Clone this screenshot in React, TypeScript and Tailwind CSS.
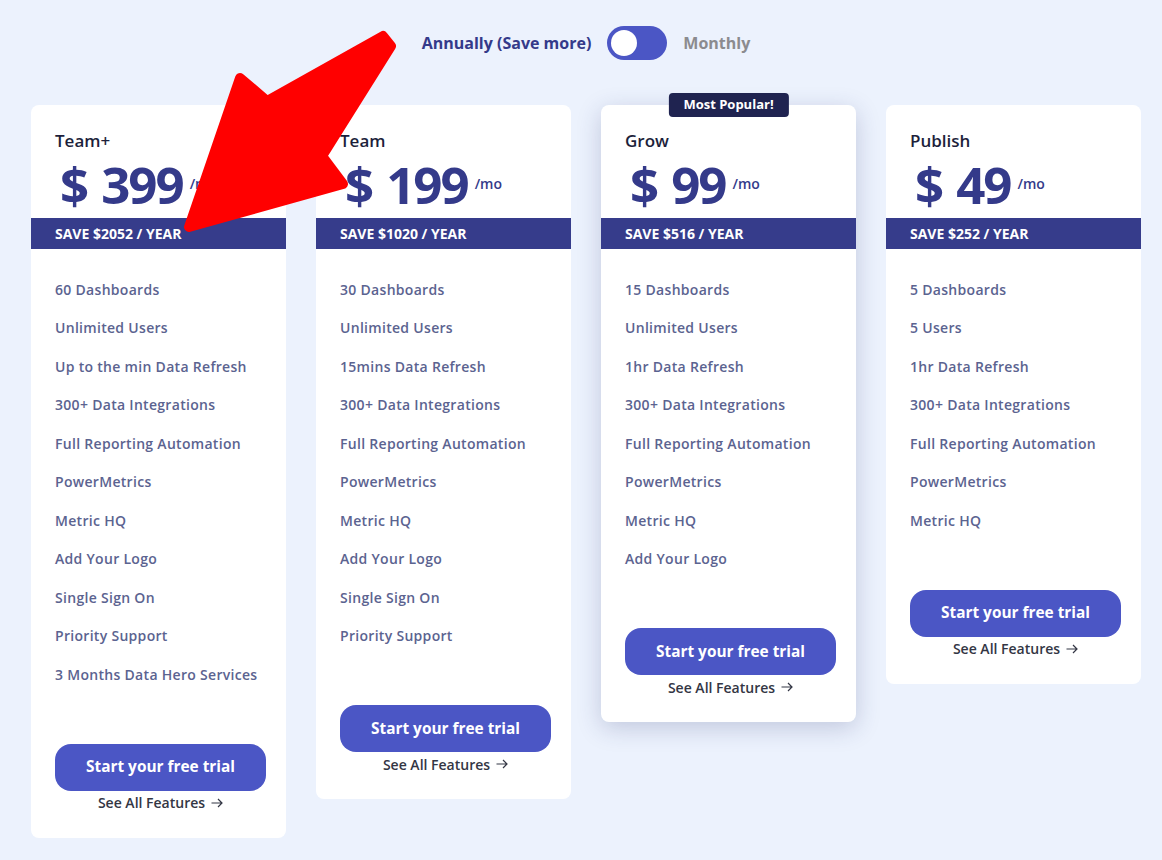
import React from 'react';

type Plan = {
  name: string;
  price: string;
  save: string;
  features: string[];
  popular?: boolean;
};

const plans: Plan[] = [
  {
    name: 'Team+',
    price: '399',
    save: 'SAVE $2052 / YEAR',
    features: [
      '60 Dashboards',
      'Unlimited Users',
      'Up to the min Data Refresh',
      '300+ Data Integrations',
      'Full Reporting Automation',
      'PowerMetrics',
      'Metric HQ',
      'Add Your Logo',
      'Single Sign On',
      'Priority Support',
      '3 Months Data Hero Services',
    ],
  },
  {
    name: 'Team',
    price: '199',
    save: 'SAVE $1020 / YEAR',
    features: [
      '30 Dashboards',
      'Unlimited Users',
      '15mins Data Refresh',
      '300+ Data Integrations',
      'Full Reporting Automation',
      'PowerMetrics',
      'Metric HQ',
      'Add Your Logo',
      'Single Sign On',
      'Priority Support',
    ],
  },
  {
    name: 'Grow',
    price: '99',
    save: 'SAVE $516 / YEAR',
    popular: true,
    features: [
      '15 Dashboards',
      'Unlimited Users',
      '1hr Data Refresh',
      '300+ Data Integrations',
      'Full Reporting Automation',
      'PowerMetrics',
      'Metric HQ',
      'Add Your Logo',
    ],
  },
  {
    name: 'Publish',
    price: '49',
    save: 'SAVE $252 / YEAR',
    features: [
      '5 Dashboards',
      '5 Users',
      '1hr Data Refresh',
      '300+ Data Integrations',
      'Full Reporting Automation',
      'PowerMetrics',
      'Metric HQ',
    ],
  },
];

const PlanCard: React.FC<{ plan: Plan }> = ({ plan }) => (
  <div
    className={`relative w-[255px] shrink-0 rounded-lg bg-white pt-[25px] pb-[25px] ${
      plan.popular ? 'shadow-[0_6px_24px_rgba(40,50,110,0.22)]' : ''
    }`}
  >
    {plan.popular && (
      <div className="absolute -top-[12px] left-1/2 -translate-x-1/2 rounded-[4px] bg-[#1f2350] px-[15px] h-[24px] flex items-center text-[13px] font-bold text-white whitespace-nowrap">
        Most Popular!
      </div>
    )}
    <div className="px-6">
      <div className="text-[17px] font-semibold leading-[22px] text-[#1d1f3b]">{plan.name}</div>
      <div className="flex items-start pl-[5px] h-[66px] pt-[6px] text-[#343a8a]">
        <span className="text-[51px] font-bold leading-[52px]">$</span>
        <span className="ml-[12px] text-[51px] font-bold leading-[52px] tracking-[-2px]">{plan.price}</span>
        <span className="ml-[7px] mt-[17px] text-[14px] font-semibold leading-[18px]">/mo</span>
      </div>
    </div>
    <div className="bg-[#363c8b] h-[31px] flex items-center px-6 text-[14px] font-bold text-white">
      {plan.save}
    </div>
    <ul className="px-6 pt-[21px]">
      {plan.features.map((f) => (
        <li
          key={f}
          className="h-[38.5px] flex items-center text-[14px] font-semibold tracking-[0.3px] text-[#5b6390]"
        >
          {f}
        </li>
      ))}
    </ul>
    <div className="px-6 mt-[50px]">
      <button className="w-[211px] h-[47px] rounded-[16px] bg-[#4b56c5] text-[15.4px] font-bold text-white">
        Start your free trial
      </button>
      <div className="mt-[2px] w-[211px] h-[20px] flex items-center justify-center gap-[6px] text-[14px] font-semibold text-[#333644]">
        <span>See All Features</span>
        <svg width="12" height="10" viewBox="0 0 12 10" fill="none" stroke="#333644" strokeWidth="1.2">
          <path d="M0.5 5H11M7 1l4 4-4 4" />
        </svg>
      </div>
    </div>
  </div>
);

export default function App() {
  return (
    <div
      className="relative w-[1162px] h-[860px] overflow-hidden bg-[#ecf2fd]"
      style={{ fontFamily: '"Open Sans", "Noto Sans", sans-serif' }}
    >
      <div className="flex items-center justify-center pl-[10px] pt-[26px] h-[60px] gap-4">
        <span className="text-[16px] font-bold text-[#343a8a]">Annually (Save more)</span>
        <div className="w-[60px] h-[34px] rounded-full bg-[#4b56c5] flex items-center pl-[4px]">
          <div className="w-[26px] h-[26px] rounded-full bg-white" />
        </div>
        <span className="text-[16px] font-bold text-[#8b8b8f]">Monthly</span>
      </div>
      <div className="flex items-start gap-[30px] pl-[31px] pt-[45px]">
        {plans.map((p) => (
          <PlanCard key={p.name} plan={p} />
        ))}
      </div>
      <svg
        className="absolute left-0 top-0 pointer-events-none"
        width="1162"
        height="860"
        viewBox="0 0 1162 860"
      >
        <polygon
          points="189,227 240,78 267,101 383,36 391,46 322,156 343,184"
          fill="#ff0000"
          stroke="#ff0000"
          strokeWidth="10"
          strokeLinejoin="round"
        />
      </svg>
    </div>
  );
}
